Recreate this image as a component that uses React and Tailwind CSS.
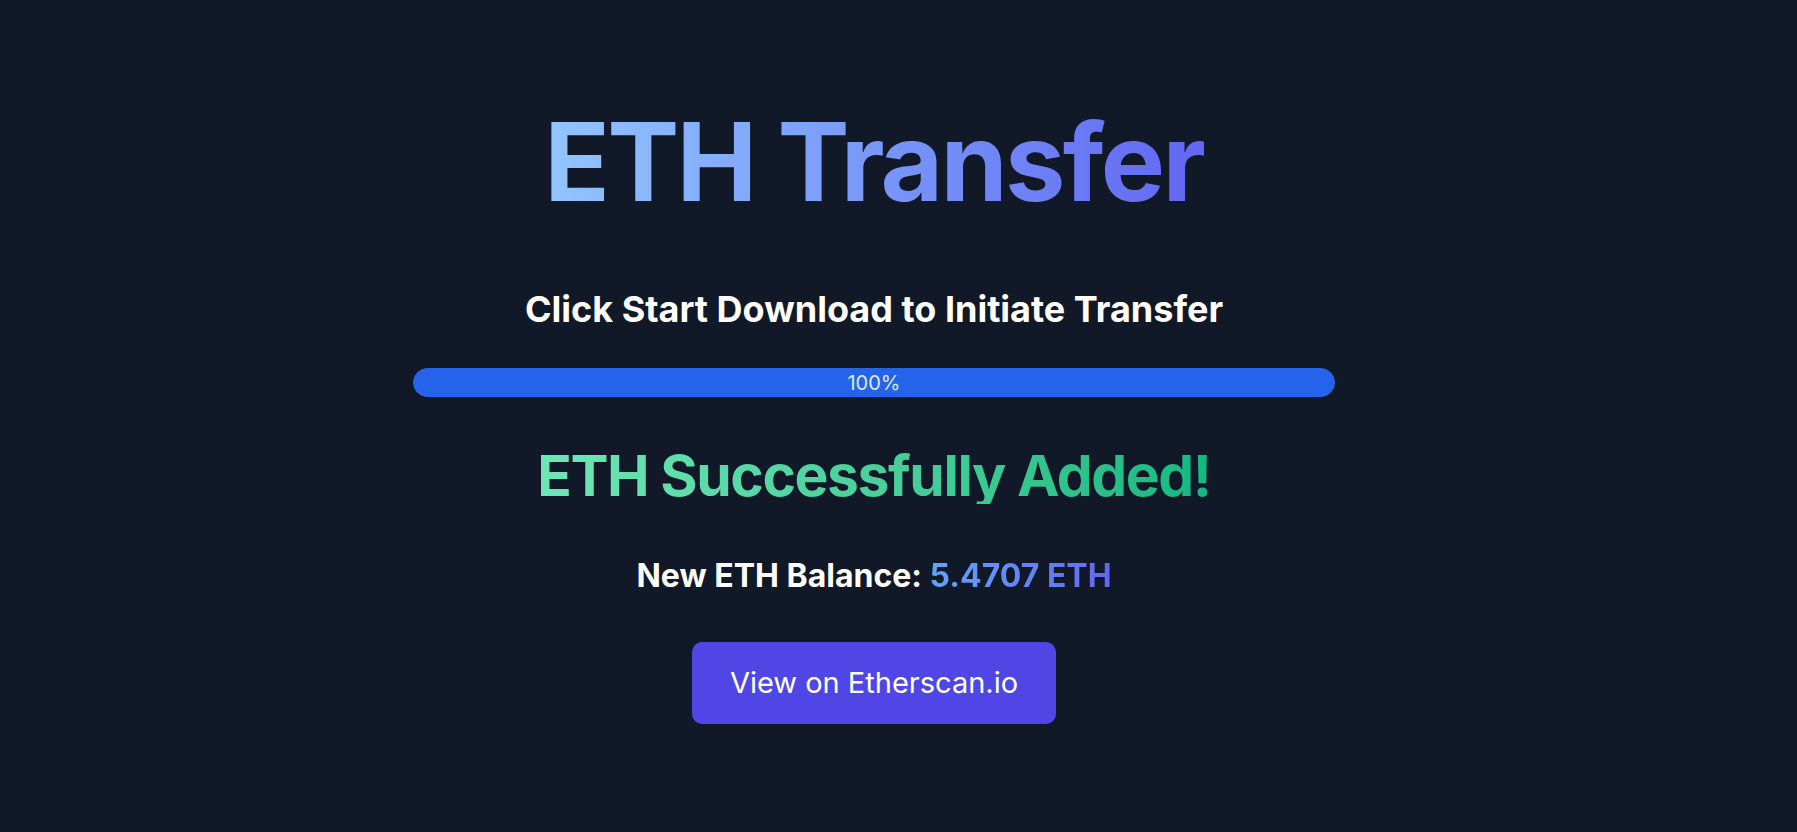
import React from "react";

export default function App() {
  const progress = 100;
  const balance = "5.4707";

  return (
    <div className="min-h-screen w-full bg-[#111827] text-white font-['Inter',sans-serif]">
      <div className="flex flex-col items-center pr-[49px] pt-[108px]">
        <h1 className="text-[108px] leading-none font-bold tracking-tight bg-linear-to-r from-[#93c5fd] to-[#6366f1] bg-clip-text text-transparent">
          ETH Transfer
        </h1>

        <h2 className="mt-[73px] text-[36px] leading-[40px] font-bold">
          Click Start Download to Initiate Transfer
        </h2>

        <div className="mt-[39px] w-[922px] h-[29px] rounded-full bg-[#1f2937] overflow-hidden">
          <div
            className="h-full rounded-full bg-[#2563eb] flex items-center justify-center text-[20px] text-[#dbeafe]"
            style={{ width: `${progress}%` }}
          >
            {progress}%
          </div>
        </div>

        <h3 className="mt-[50px] text-[57px] leading-none font-bold tracking-tight bg-linear-to-r from-[#6ee7b7] to-[#10b981] bg-clip-text text-transparent">
          ETH Successfully Added!
        </h3>

        <p className="mt-[52px] text-[32px] leading-[40px] font-bold">
          New ETH Balance:{" "}
          <span className="bg-linear-to-r from-[#60a5fa] to-[#6366f1] bg-clip-text text-transparent">
            {balance} ETH
          </span>
        </p>

        <button className="mt-[46px] h-[82px] px-[38px] rounded-[10px] bg-[#4f46e5] text-[29px] text-white">
          View on Etherscan.io
        </button>
      </div>
    </div>
  );
}
